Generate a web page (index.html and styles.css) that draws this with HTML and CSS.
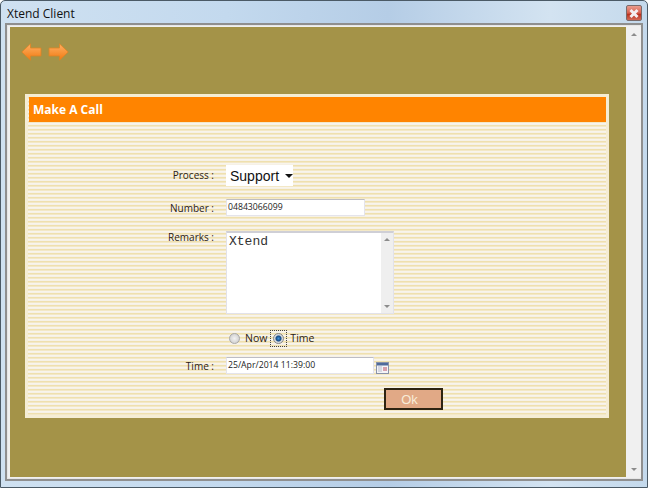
FILE: index.html
```html
<!DOCTYPE html>
<html>
<head>
<meta charset="utf-8">
<title>Xtend Client</title>
<link rel="stylesheet" href="styles.css">
</head>
<body>
<div class="window">
  <header class="titlebar">
    <span class="title">Xtend Client</span>
    <span class="close"><svg width="12" height="11" viewBox="0 0 12 11"><path d="M2.500 2 L9.500 9 M9.500 2 L2.500 9" stroke="#f4f0f0" stroke-width="3"/></svg></span>
  </header>
  <div class="frame">
    <main class="content">
      <nav class="nav">
        <svg width="21" height="18" viewBox="0 0 21 18"><defs><linearGradient id="a" x1="0" y1="0" x2="0" y2="1"><stop offset="0" stop-color="#ffb064"/><stop offset="1" stop-color="#f07a10"/></linearGradient></defs><path d="M.8 9 L9.500 .8 V5 H20 V13 H9.500 V17.200 Z" fill="url(#a)" stroke="#dd8424" stroke-width=".8"/></svg>
        <svg width="21" height="18" viewBox="0 0 21 18"><path d="M20.200 9 L11.500 .8 V5 H1 V13 H11.500 V17.200 Z" fill="url(#a)" stroke="#dd8424" stroke-width=".8"/></svg>
      </nav>
      <section class="panel">
        <h1 class="panel-title">Make A Call</h1>
        <form class="form">
          <label class="label label-process">Process :</label>
          <div class="select"><span>Support</span><i class="caret"></i></div>
          <label class="label label-number">Number :</label>
          <div class="input input-number">04843066099</div>
          <label class="label label-remarks">Remarks :</label>
          <div class="textarea">
            <span class="textarea-text">Xtend</span>
            <div class="textarea-scroll"><i class="up"></i><i class="down"></i></div>
          </div>
          <div class="radios">
            <span class="radio"></span><span class="radio-text">Now</span>
            <span class="radio-focus"><span class="radio radio-on"></span></span><span class="radio-text">Time</span>
          </div>
          <label class="label label-time">Time :</label>
          <div class="time-row">
            <div class="input input-time">25/Apr/2014 11:39:00</div>
            <svg class="cal" width="13" height="12" viewBox="0 0 13 12"><rect x=".5" y=".5" width="12" height="11" fill="#f4f4f8" stroke="#8a93a8"/><rect x="1" y="1" width="11" height="2.500" fill="#4f6a9c"/><rect x="7" y="5" width="4" height="4" fill="#d8a0ac"/><path d="M2 5h4M2 7h4M2 9h4" stroke="#b8bdcc"/></svg>
          </div>
          <div class="actions"><button class="ok" type="button">Ok</button></div>
        </form>
      </section>
    </main>
    <aside class="scrollbar"><i class="up"></i><i class="down"></i></aside>
  </div>
</div>
</body>
</html>
```
FILE: styles.css
```css
* { box-sizing: border-box; }
html, body { margin: 0; padding: 0; }
body { width: 648px; height: 488px; overflow: hidden; font-family: "Liberation Sans", Arial, sans-serif; }
.window {
  width: 648px; height: 488px; display: flex; flex-direction: column;
  background: linear-gradient(90deg, #cfe1f1 0%, #c3d9ee 35%, #b5cde6 60%, #d3e3f1 85%, #c4d9ec 100%);
  border: 1px solid #4b5a66; border-radius: 5px 5px 0 0;
  padding: 0 4px 6px 4px;
}
.titlebar { height: 22px; display: flex; align-items: center; justify-content: space-between; flex: none; }
.title { font-family: "Open Sans", "Liberation Sans", sans-serif; font-size: 12px; color: #111; margin-left: 2px; margin-top: 2px; }
.close {
  width: 16px; height: 16px; margin: 2px 1px 0 0; display: flex; align-items: center; justify-content: center;
  background: linear-gradient(#e89c8e 0%, #d8604e 50%, #b8321f 60%, #d46a55 100%);
  border: 1px solid #7a6a6a; border-radius: 2px;
}
.frame {
  flex: 1; display: flex; min-height: 0;
  background: #f0f0f0;
  border: 2px solid #8f8f8f;
  padding: 2px 0 2px 3px;
  box-shadow: inset 0 0 0 1px #e6e6e6;
}
.content { flex: 1; background: #a49348; padding: 16px 16px 0 15px; min-width: 0; }
.nav { display: flex; gap: 6px; height: 51px; margin-left: -4px; align-items: flex-start; }
.panel {
  width: 584px; height: 324px; border: 3px solid #f5edd4;
  background: repeating-linear-gradient(180deg, #efe0ae 0, #efe0ae 1px, #f3e8c6 1px, #f3e8c6 2px, #f8f4ec 2px, #f8f4ec 3px, #f6f1e6 3px, #f6f1e6 4px);
}
.panel-title {
  margin: 0 0 0 1px; height: 25px; background: #ff8400; color: #fff; font-size: 12px; font-weight: bold;
  font-family: "Open Sans", "Liberation Sans", sans-serif; line-height: 25px; padding-left: 4px;
}
.form {
  display: grid; grid-template-columns: 186px auto; column-gap: 12px; align-items: start;
  grid-template-rows: 34px 32px 99px 27px 31px 22px;
  padding-top: 43px;
  justify-content: start;
}
.label { justify-self: end; font-family: "Open Sans", "Liberation Sans", sans-serif; font-size: 10px; color: #2b2116; }
.label-process { margin-top: 3px; }
.label-number { margin-top: 2px; }
.label-remarks { margin-top: -1px; }
.label-time { margin-top: 2px; }
.select {
  width: 67px; height: 21px; background: #fff; display: flex; align-items: center; gap: 6px; padding-left: 4px;
  font-size: 14px; color: #111;
}
.caret { width: 0; height: 0; border: 4px solid transparent; border-top: 4px solid #111; border-bottom: 0; }
.input {
  background: #fff; height: 17px; border: 1px solid #e4e4ec; border-top-color: #bdbdc4;
  font-family: "Open Sans", "Liberation Sans", sans-serif; font-size: 8.700px; color: #222; line-height: 15px; padding-left: 1px;
}
.input-number { width: 139px; }
.input-time { width: 148px; padding-left: 1px; }
.textarea {
  width: 168px; height: 83px; background: #fff; border: 1px solid #e2e2ea; border-top: 2px solid #cfcfd6; display: flex; justify-content: space-between;
}
.textarea-text { font-family: "Liberation Mono", monospace; font-size: 13px; color: #333; padding: 1px 0 0 2px; }
.textarea-scroll {
  width: 12px; background: #efefef; display: flex; flex-direction: column; justify-content: space-between; align-items: center; padding: 5px 0;
}
.up, .down { display: block; width: 0; height: 0; border: 3px solid transparent; }
.up { border-top: 0; border-bottom: 3px solid #8c8c8c; }
.down { border-bottom: 0; border-top: 3px solid #8c8c8c; }
.radios {
  grid-column: 2; display: flex; align-items: center; height: 16px; font-family: "Open Sans", "Liberation Sans", sans-serif;
  font-size: 10.500px; color: #2b2116; padding-left: 3px;
}
.radio {
  width: 11px; height: 11px; border-radius: 50%; background: radial-gradient(#f2f2f2, #c8c8c8); border: 1px solid #a8a8a8; display: block; flex: none;
}
.radio-on { background: radial-gradient(#3f8fd6 0, #144a86 40%, #d4d8dc 55%); border-color: #888; }
.radio-text { margin-left: 5px; }
.radio-text + .radio-focus { margin-left: 3px; }
.radio-focus { border: 1px dotted #444; padding: 2px; display: block; }
.radio-focus + .radio-text { margin-left: 3px; }
.time-row { display: flex; align-items: flex-end; gap: 2px; height: 17px; grid-column: 2; grid-row: 5; }
.label-time { grid-row: 5; }
.cal { display: block; }
.actions { grid-column: 2; padding-left: 158px; }
.ok {
  display: block; width: 59px; height: 22px; background: #e1a986; border: 2px solid #2e2412; color: #f8ecd8;
  font-family: "Liberation Sans", sans-serif; font-size: 13px; padding: 0 8px 0 0;
}
.scrollbar {
  width: 15px; flex: none; background: #f0f0f0; display: flex; flex-direction: column; justify-content: space-between; align-items: center; padding: 6px 0; margin-left: -1px;
}
```
